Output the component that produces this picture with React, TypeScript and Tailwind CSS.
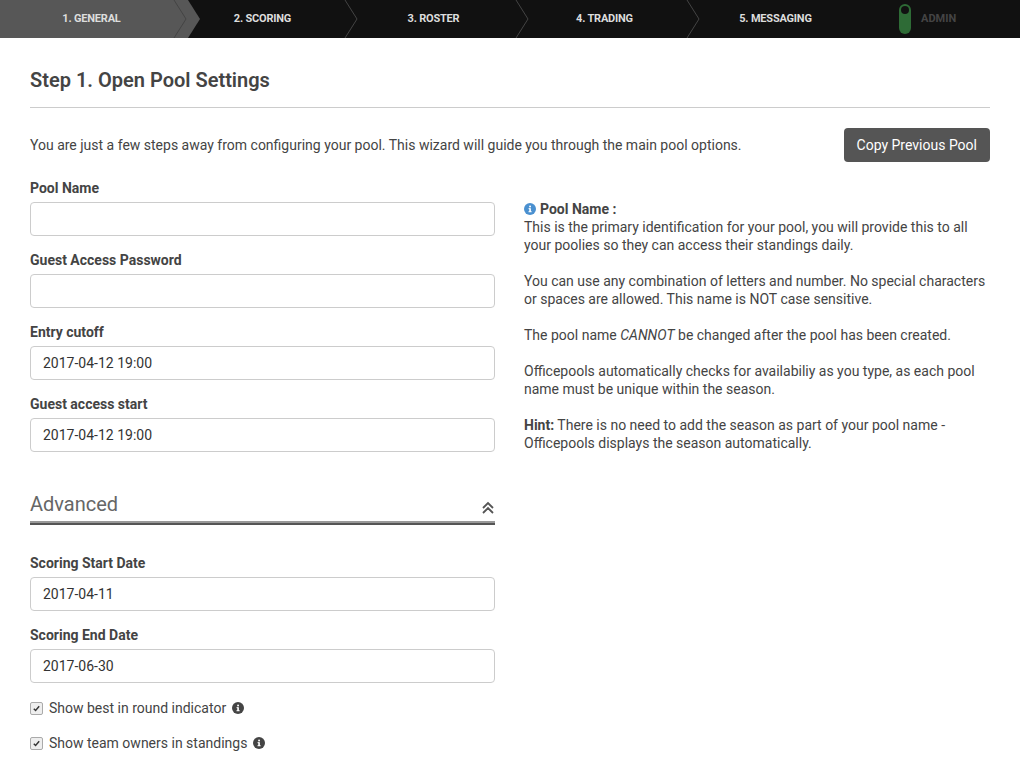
import React from 'react';

const steps = ['1. GENERAL', '2. SCORING', '3. ROSTER', '4. TRADING', '5. MESSAGING'];

function Info({ className = '' }: { className?: string }) {
  return (
    <svg className={className} viewBox="0 0 16 16" width="12" height="12">
      <circle cx="8" cy="8" r="8" fill="currentColor" />
      <rect x="7" y="7" width="2.2" height="5" fill="#fff" />
      <rect x="6" y="11" width="4.2" height="1.3" fill="#fff" />
      <rect x="6" y="7" width="2" height="1.2" fill="#fff" />
      <circle cx="8.1" cy="4.6" r="1.3" fill="#fff" />
    </svg>
  );
}

function Field({ label, value = '' }: { label: string; value?: string }) {
  return (
    <div className="mb-[16px]">
      <div className="text-[14px] font-bold text-[#444] mb-[6px] leading-[16px]">{label}</div>
      <div className="h-[34px] border border-[#ccc] rounded-[4px] px-3 flex items-center text-[14px] text-[#333]">{value}</div>
    </div>
  );
}

function Check({ label }: { label: string }) {
  return (
    <div className="flex items-center gap-[6px] text-[14px] text-[#444] h-[18px] mb-[17px]">
      <span className="w-[13px] h-[13px] border border-[#aaa] rounded-[2px] bg-[#eee] flex items-center justify-center">
        <svg viewBox="0 0 10 10" width="9" height="9"><path d="M2 5.2l2 2 4-4.6" stroke="#333" strokeWidth="1.6" fill="none" /></svg>
      </span>
      <span>{label}</span>
      <Info className="text-[#444]" />
    </div>
  );
}

export default function App() {
  return (
    <div className="w-[1020px] h-[761px] bg-white overflow-hidden" style={{ fontFamily: 'Roboto, "Liberation Sans", sans-serif' }}>
      <div className="relative h-[38px] bg-[#111] flex items-center">
        <div className="absolute left-0 top-0 h-[38px] w-[200px] bg-[#575757]" style={{ clipPath: 'polygon(0 0,188px 0,200px 19px,188px 38px,0 38px)' }} />
        {steps.map((s, i) => (
          <div key={s} className="relative w-[171px] h-full flex items-center justify-center text-[11px] font-bold text-[#ddd] tracking-[-0.2px]" style={{ marginLeft: i === 0 ? 6 : 0 }}>
            {s}
            {i > 0 && (
              <svg className="absolute -left-[4px] top-0" width="14" height="38" viewBox="0 0 14 38"><path d="M1 0L13 19L1 38" stroke="#444" strokeWidth="1" fill="none" /></svg>
            )}
          </div>
        ))}
        <div className="flex items-center ml-[38px] gap-[10px]">
          <div className="w-[12px] h-[30px] rounded-full bg-[#2e6b36] relative">
            <div className="absolute left-[2px] top-[2px] w-[8px] h-[8px] rounded-full bg-[#111]" />
          </div>
          <span className="text-[11px] font-bold text-[#444]">ADMIN</span>
        </div>
      </div>

      <div className="px-[30px]">
        <h1 className="text-[20px] font-semibold text-[#444] pt-[30px] leading-[24px]">Step 1. Open Pool Settings</h1>
        <div className="border-t border-[#ccc] mt-[15px]" />
        <div className="flex items-center justify-between mt-[20px]">
          <p className="text-[14px] text-[#444]">You are just a few steps away from configuring your pool. This wizard will guide you through the main pool options.</p>
          <button className="h-[34px] px-[13px] bg-[#555] text-white text-[14px] rounded-[4px]">Copy Previous Pool</button>
        </div>

        <div className="flex mt-[18px]">
          <div className="w-[465px]">
            <Field label="Pool Name" />
            <Field label="Guest Access Password" />
            <Field label="Entry cutoff" value="2017-04-12 19:00" />
            <Field label="Guest access start" value="2017-04-12 19:00" />
            <div className="mt-[39px] flex items-end justify-between h-[30px] pb-[2px]">
              <span className="text-[20px] text-[#666]">Advanced</span>
              <svg width="14" height="14" viewBox="0 0 14 14" className="mb-[4px]"><path d="M2 7l5-5 5 5M2 12l5-5 5 5" stroke="#555" strokeWidth="1.8" fill="none" /></svg>
            </div>
            <div className="h-[4px] bg-[#999] border-b-2 border-[#555]" />
            <div className="mt-[30px]">
              <Field label="Scoring Start Date" value="2017-04-11" />
              <Field label="Scoring End Date" value="2017-06-30" />
            </div>
            <Check label="Show best in round indicator" />
            <Check label="Show team owners in standings" />
          </div>

          <div className="ml-[29px] w-[466px] pt-[20px] text-[14px] text-[#444] leading-[18px]">
            <div className="flex items-center gap-[4px] font-bold"><Info className="text-[#4a90d0]" />Pool Name :</div>
            <p>This is the primary identification for your pool, you will provide this to all your poolies so they can access their standings daily.</p>
            <p className="mt-[18px]">You can use any combination of letters and number. No special characters or spaces are allowed. This name is NOT case sensitive.</p>
            <p className="mt-[18px]">The pool name <i>CANNOT</i> be changed after the pool has been created.</p>
            <p className="mt-[18px]">Officepools automatically checks for availabiliy as you type, as each pool name must be unique within the season.</p>
            <p className="mt-[18px]"><b>Hint:</b> There is no need to add the season as part of your pool name - Officepools displays the season automatically.</p>
          </div>
        </div>
      </div>
    </div>
  );
}
